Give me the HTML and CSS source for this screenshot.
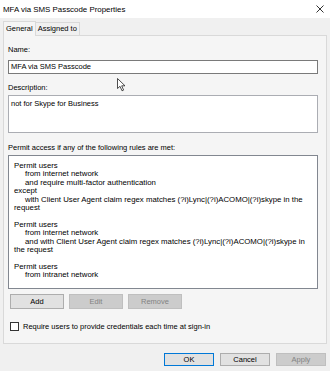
FILE: index.html
```html
<!DOCTYPE html>
<html lang="en">
<head>
    <meta charset="UTF-8">
    <title>MFA via SMS Passcode Properties</title>
    <link rel="stylesheet" href="styles.css">
</head>
<body>
    <div class="dialog">
        <div class="titlebar">
            <span class="title">MFA via SMS Passcode Properties</span>
            <svg class="close" width="8" height="8" viewBox="0 0 8 8">
                <path d="M0.5 0.5 L7.5 7.5 M7.5 0.5 L0.5 7.5" stroke="#333" stroke-width="1" fill="none"/>
            </svg>
        </div>

        <div class="tabs">
            <div class="tab active">General</div>
            <div class="tab">Assigned to</div>
        </div>

        <div class="panel">
            <div class="label name-label">Name:</div>
            <div class="field">MFA via SMS Passcode</div>

            <div class="label">Description:</div>
            <div class="field area">not for Skype for Business</div>

            <div class="label">Permit access if any of the following rules are met:</div>
            <div class="rules">
                <div class="rule">
                    <div>Permit users</div>
                    <div class="indent">from internet network</div>
                    <div class="indent">and require multi-factor authentication</div>
                    <div>except</div>
                    <div class="indent">with Client User Agent claim regex matches (?i)Lync|(?i)ACOMO|(?i)skype in the</div>
                    <div>request</div>
                </div>
                <div class="rule">
                    <div>Permit users</div>
                    <div class="indent">from internet network</div>
                    <div class="indent">and with Client User Agent claim regex matches (?i)Lync|(?i)ACOMO|(?i)skype in</div>
                    <div>the request</div>
                </div>
                <div class="rule">
                    <div>Permit users</div>
                    <div class="indent">from intranet network</div>
                </div>
            </div>

            <div class="rule-buttons">
                <button class="btn">Add</button>
                <button class="btn" disabled>Edit</button>
                <button class="btn" disabled>Remove</button>
            </div>

            <label class="check">
                <span class="box"></span>
                Require users to provide credentials each time at sign-in
            </label>
        </div>

        <div class="footer">
            <button class="btn default">OK</button>
            <button class="btn">Cancel</button>
            <button class="btn" disabled>Apply</button>
        </div>

        <svg class="pointer" width="10" height="14" viewBox="0 0 10 14">
            <path d="M0.5 0.5 L0.5 10.5 L3 8.3 L5 12.8 L6.6 12.1 L4.7 7.8 L8 7.8 Z" fill="#fff" stroke="#222" stroke-width="0.8"/>
        </svg>
    </div>
</body>
</html>
```

FILE: styles.css
```css
* {
    margin: 0;
    padding: 0;
    box-sizing: border-box;
}

body {
    font-family: "Liberation Sans", Arial, sans-serif;
    font-size: 7.5px;
    color: #000;
    background: #f0f0f0;
}

.dialog {
    position: relative;
    width: 330px;
    height: 371px;
    background: #f0f0f0;
    overflow: hidden;
}

.titlebar {
    height: 18px;
    background: #fff;
    display: flex;
    align-items: center;
    justify-content: space-between;
    padding: 0 6px 0 3px;
}

.title {
    font-size: 7.9px;
    color: #000;
}

.tabs {
    display: flex;
    align-items: flex-end;
    height: 17px;
    padding-left: 3px;
}

.tab {
    height: 13px;
    line-height: 12px;
    padding: 0 2px;
    border: 1px solid #d9d9d9;
    border-bottom: none;
    border-left: none;
    background: #f0f0f0;
}

.tab.active {
    height: 15px;
    line-height: 13px;
    border-left: 1px solid #d9d9d9;
    background: #f5f5f5;
    position: relative;
    top: 1px;
}

.panel {
    height: 309px;
    margin: 0 3px;
    border: 1px solid #d9d9d9;
    background: #f5f5f5;
    padding: 9px 8px 0 4px;
}

.label {
    height: 10px;
    line-height: 10px;
    margin-bottom: 2px;
}

.name-label {
    margin-bottom: 5px;
}

.field {
    height: 14px;
    line-height: 12px;
    background: #fff;
    border: 1px solid #7a7a7a;
    padding: 0 2px;
    margin-bottom: 9px;
}

.area {
    height: 38px;
    padding-top: 2px;
    border-color: #abadb3;
    margin-bottom: 10px;
}

.rules {
    height: 134px;
    background: #fff;
    border: 1px solid #828790;
    padding: 6px 5px 0;
    font-size: 7.8px;
    line-height: 8.4px;
    white-space: nowrap;
}

.rule {
    margin-bottom: 8.4px;
}

.indent {
    padding-left: 11px;
}

.rule-buttons {
    display: flex;
    gap: 5px;
    margin: 5px 0 0 2px;
}

.btn {
    width: 54px;
    height: 15px;
    font-family: inherit;
    font-size: 7.5px;
    color: #000;
    background: #e1e1e1;
    border: 1px solid #adadad;
}

.btn:disabled {
    color: #838383;
    background: #cccccc;
    border-color: #bfbfbf;
}

.check {
    display: flex;
    align-items: center;
    gap: 4px;
    height: 10px;
    margin: 12px 0 0 2px;
}

.box {
    width: 9px;
    height: 9px;
    background: #fff;
    border: 1px solid #333;
}

.footer {
    display: flex;
    justify-content: flex-end;
    gap: 6px;
    padding: 9px 4px 0 0;
}

.footer .btn {
    width: 50px;
    height: 13px;
}

.btn.default {
    border-color: #0078d7;
}

.pointer {
    position: absolute;
    left: 117px;
    top: 78px;
}
```
